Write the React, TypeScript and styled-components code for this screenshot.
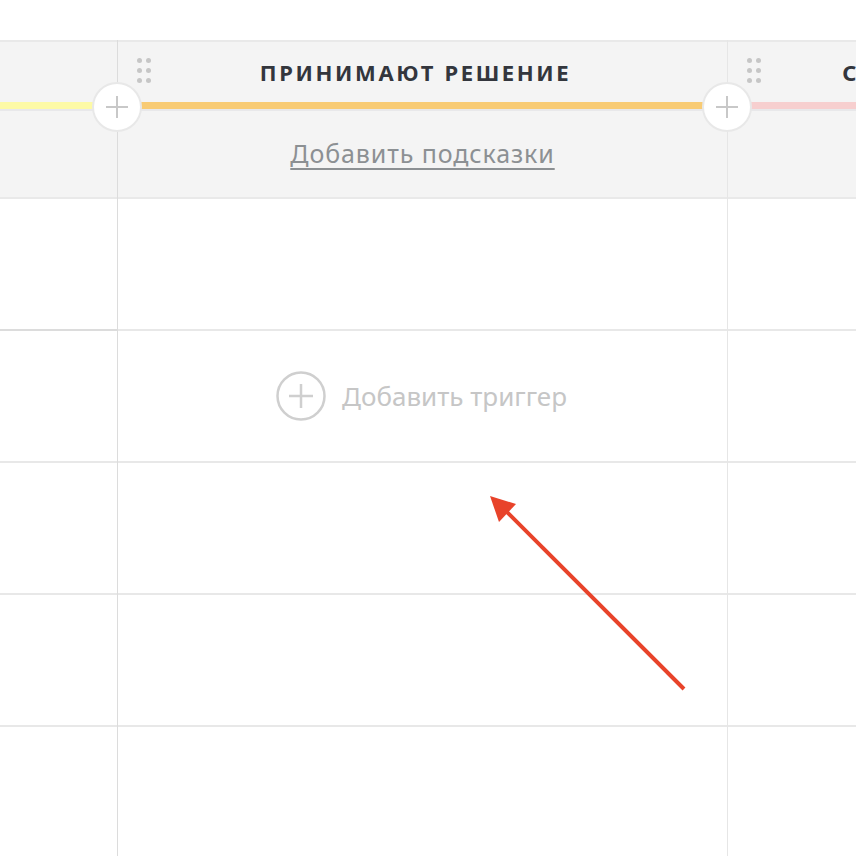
import React from "react"
import styled, { createGlobalStyle } from "styled-components"

const GlobalStyle = createGlobalStyle`
  html, body {
    margin: 0;
    padding: 0;
    background: #ffffff;
  }
  body {
    font-family: "Noto Sans", "Open Sans", sans-serif;
  }
`

type Stage = {
  title: string
  color: string
}

const stages: Stage[] = [
  { title: "ИЗУЧАЮТ", color: "#fdfaa6" },
  { title: "ПРИНИМАЮТ РЕШЕНИЕ", color: "#f8cb74" },
  { title: "СОГЛАШАЮТСЯ НА ЗАКАЗЫ", color: "#f7cfcf" },
]

const ROWS = 5

const Page = styled.div`
  position: relative;
  width: 856px;
  height: 856px;
  overflow: hidden;
  padding-top: 40px;
  box-sizing: border-box;
`

const Board = styled.div`
  display: flex;
  margin-left: -492px;
  width: max-content;
`

const Column = styled.div<{ $dark?: boolean }>`
  width: 610px;
  flex-shrink: 0;
  border-right: 1px solid ${(p) => (p.$dark ? "#dcdcdc" : "#e6e6e6")};
  box-sizing: border-box;
`

const Header = styled.div`
  position: relative;
  height: 159px;
  background: #f4f4f4;
  border-top: 2px solid #e9e9e9;
  border-bottom: 2px solid #e9e9e9;
  box-sizing: border-box;
  display: flex;
  flex-direction: column;
`

const TitleRow = styled.div`
  height: 60px;
  display: flex;
  align-items: center;
  justify-content: center;
  padding-right: 14px;
  position: relative;
`

const Handle = styled.div`
  position: absolute;
  left: 19px;
  top: 16px;
  display: grid;
  grid-template-columns: repeat(2, 5px);
  column-gap: 4px;
  row-gap: 5px;
`

const Dot = styled.span`
  width: 5px;
  height: 5px;
  border-radius: 50%;
  background: #c6c6c6;
`

const Title = styled.div`
  font-family: "Noto Sans", sans-serif;
  font-weight: 700;
  font-size: 22px;
  letter-spacing: 2.6px;
  color: #33363d;
  white-space: nowrap;
`

const Bar = styled.div<{ $color: string }>`
  height: 7px;
  background: ${(p) => p.$color};
  border-bottom: 2px solid #e8e8ea;
`

const HintRow = styled.div`
  flex: 1;
  display: flex;
  align-items: center;
  justify-content: center;
  padding-bottom: 2px;
`

const HintLink = styled.a`
  font-family: "Noto Sans", sans-serif;
  font-size: 25px;
  letter-spacing: 0.9px;
  color: #8c9093;
  text-decoration: underline;
  text-decoration-thickness: 2px;
  text-underline-offset: 5px;
  cursor: pointer;
`

const AddStage = styled.button`
  position: absolute;
  right: -25px;
  top: 40px;
  width: 50px;
  height: 50px;
  border-radius: 50%;
  border: 2px solid #e8e8e8;
  background: #ffffff;
  padding: 0;
  display: flex;
  align-items: center;
  justify-content: center;
  z-index: 2;
`

const Cell = styled.div<{ $dark?: boolean }>`
  height: 132px;
  border-bottom: 2px solid ${(p) => (p.$dark ? "#dcdcdc" : "#e8e8e8")};
  box-sizing: border-box;
  display: flex;
  align-items: center;
  justify-content: center;
`

const AddTrigger = styled.div`
  display: flex;
  align-items: center;
  gap: 16px;
  color: #c6c6c6;
  font-family: "Noto Sans", sans-serif;
  font-size: 26px;
  margin-left: -2px;
`

const Arrow = styled.svg`
  position: absolute;
  left: 480px;
  top: 485px;
  pointer-events: none;
`

const PlusIcon = ({ size, color, width }: { size: number; color: string; width: number }) => (
  <svg width={size} height={size} viewBox="0 0 24 24">
    <path d="M12 1v22M1 12h22" stroke={color} strokeWidth={width} fill="none" />
  </svg>
)

const CirclePlus = () => (
  <svg width="50" height="50" viewBox="0 0 50 50">
    <circle cx="25" cy="25" r="23.5" stroke="#cfcfcf" strokeWidth="2.5" fill="none" />
    <path d="M25 13v24M13 25h24" stroke="#cfcfcf" strokeWidth="2.5" />
  </svg>
)

const App = () => {
  return (
    <Page>
      <GlobalStyle />
      <Board>
        {stages.map((stage, i) => (
          <Column key={stage.title} $dark={i === 0}>
            <Header>
              <TitleRow>
                <Handle>
                  {Array.from({ length: 6 }).map((_, d) => (
                    <Dot key={d} />
                  ))}
                </Handle>
                <Title>{stage.title}</Title>
              </TitleRow>
              <Bar $color={stage.color} />
              <HintRow>
                <HintLink>Добавить подсказки</HintLink>
              </HintRow>
              <AddStage>
                <PlusIcon size={24} color="#c8c8c8" width={2} />
              </AddStage>
            </Header>
            {Array.from({ length: ROWS }).map((_, r) => (
              <Cell key={r} $dark={i === 0 && r === 0}>
                {i === 1 && r === 1 && (
                  <AddTrigger>
                    <CirclePlus />
                    Добавить триггер
                  </AddTrigger>
                )}
              </Cell>
            ))}
          </Column>
        ))}
      </Board>
      <Arrow width="220" height="220" viewBox="0 0 220 220">
        <line x1="204" y1="204" x2="24" y2="24" stroke="#e8432a" strokeWidth="4" />
        <polygon points="10,11 36,19 19,37" fill="#e8432a" />
      </Arrow>
    </Page>
  )
}

export default App
